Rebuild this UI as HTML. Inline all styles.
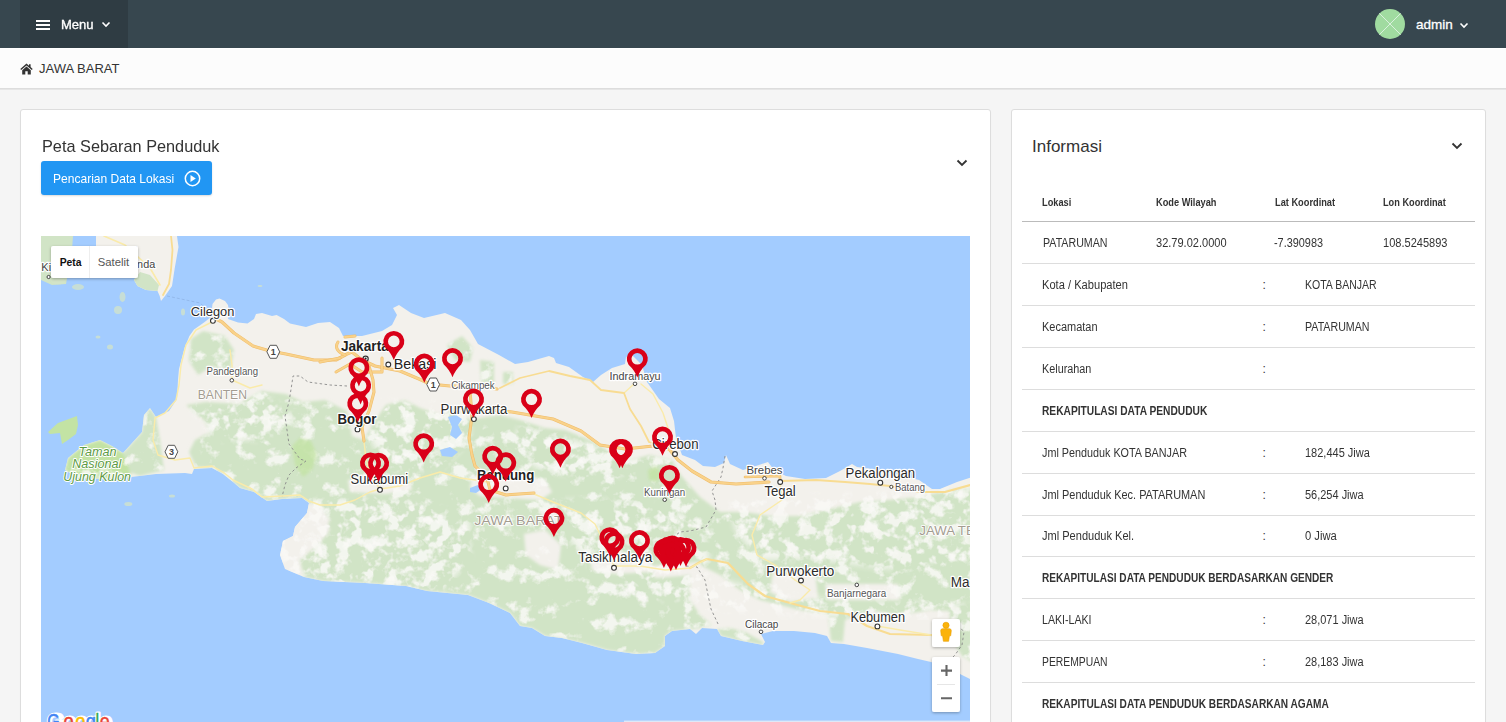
<!DOCTYPE html>
<html lang="id">
<head>
<meta charset="utf-8">
<title>JAWA BARAT</title>
<style>
*{box-sizing:border-box}
html,body{margin:0;padding:0}
body{width:1506px;height:722px;overflow:hidden;background:#f5f5f5;font-family:"Liberation Sans",Arial,sans-serif;font-size:13px;color:#333;position:relative}
.navbar{position:absolute;left:0;top:0;width:1506px;height:48px;background:#37474F}
.menu-btn{position:absolute;left:20px;top:0;width:108px;height:48px;background:#2f3c43}
.menu-btn .bars{position:absolute;left:16px;top:20px;width:14px;height:2px;background:#fff;box-shadow:0 4px 0 #fff,0 8px 0 #fff}
.menu-btn .txt{position:absolute;left:41px;top:16.5px;color:#fff;font-size:13.5px;line-height:16px;font-weight:normal;-webkit-text-stroke:0.35px #fff}
.user{position:absolute;left:1416px;top:17px;color:#fff;font-size:13.5px;line-height:16px;-webkit-text-stroke:0.3px #fff}
.avatar{position:absolute;left:1375px;top:9px;width:30px;height:30px;border-radius:50%;background:#a0dba0;overflow:hidden}
.pagehead{position:absolute;left:0;top:48px;width:1506px;height:41px;background:#fcfcfc;border-top:1px solid #fff;border-bottom:1px solid #ddd;box-shadow:0 1px 0 #e6e6e6}
.pagehead .t{position:absolute;left:39px;top:12px;font-size:13px;line-height:16px;color:#333}
.panel{position:absolute;background:#fff;border:1px solid #ddd;border-radius:3px;box-shadow:0 1px 1px rgba(0,0,0,.05)}
#p1{left:20px;top:109px;width:971px;height:640px}
#p2{left:1011px;top:109px;width:475px;height:640px}
.ptitle{position:absolute;font-size:17px;line-height:20px;color:#333}
.btn{position:absolute;left:20px;top:51px;width:171px;height:34px;background:#2196F3;border-radius:3px;color:#fff;font-size:13px;line-height:35px;padding-left:12px;box-shadow:0 1px 2px rgba(0,0,0,.15)}
#map{position:absolute;left:20px;top:126px;width:929px;height:500px;background:#a3ccff;overflow:hidden}
.hr{position:absolute;left:10px;width:453px;height:1px}
.c{position:absolute;transform-origin:0 50%;font-size:12px;line-height:16px;white-space:pre;color:#333}
.c.b{font-weight:bold}
.c.h{font-weight:bold;font-size:10.5px}
</style>
</head>
<body>
<div class="navbar">
  <div class="menu-btn"><div class="bars"></div><div class="txt" style="transform:scaleX(0.965);transform-origin:0 50%">Menu</div>
    <svg style="position:absolute;left:81px;top:21px" width="10" height="7" viewBox="0 0 10 7"><path d="M1.5 1.5 L5 5 L8.5 1.5" fill="none" stroke="#fff" stroke-width="1.6"/></svg>
  </div>
  <div class="avatar"><svg width="30" height="30" viewBox="0 0 30 30"><path d="M3 3 L27 27 M27 3 L3 27" stroke="#d9f0dc" stroke-width="1"/></svg></div>
  <div class="user">admin</div>
  <svg style="position:absolute;left:1458.5px;top:21.7px" width="10" height="7" viewBox="0 0 10 7"><path d="M1.5 1.5 L5 5 L8.5 1.5" fill="none" stroke="#fff" stroke-width="1.6"/></svg>
</div>
<div class="pagehead">
  <svg style="position:absolute;left:20px;top:14px" width="13" height="12" viewBox="0 0 13 12"><path d="M6.5 0.5 L0.3 6 L1.2 7 L6.5 2.4 L11.8 7 L12.7 6 L10.6 4.1 V1.2 H9 V2.7 Z M6.5 3.6 L2.2 7.3 V11.5 H5.3 V8.3 H7.7 V11.5 H10.8 V7.3 Z" fill="#333"/></svg>
  <div class="t">JAWA BARAT</div>
</div>

<div class="panel" id="p1">
  <div class="ptitle" style="left:21px;top:27px;transform:scaleX(0.958);transform-origin:0 50%;white-space:nowrap">Peta Sebaran Penduduk</div>
  <svg style="position:absolute;left:935px;top:49px" width="12" height="8" viewBox="0 0 12 8"><path d="M1.5 1.5 L6 6 L10.5 1.5" fill="none" stroke="#333" stroke-width="1.8"/></svg>
  <div class="btn"><span style="display:inline-block;transform:scaleX(0.926);transform-origin:0 50%;white-space:nowrap">Pencarian Data Lokasi</span>
    <svg style="position:absolute;left:143px;top:9px" width="17" height="17" viewBox="0 0 17 17"><circle cx="8.5" cy="8.5" r="7.2" fill="none" stroke="#fff" stroke-width="1.5"/><path d="M6.5 5 L11.8 8.5 L6.5 12 Z" fill="#fff"/></svg>
  </div>
  <div id="map"><svg width="929" height="486" viewBox="41 236 929 486" style="position:absolute;left:0;top:0;font-family:'Liberation Sans',Arial,sans-serif">
<rect x="41" y="236" width="929" height="486" fill="#a3ccff"/>
<polygon points="41,236 73,236 72,250 66,284 52,285 41,280" fill="#d1e4c6"/>
<polygon points="96,236 177,236 178.5,247 174.6,269 172,286 165,296 161,301 159.7,296 157.5,291 146,290 137.5,286 134,280 137,274 137,246 96,246" fill="#f3f1ec"/>
<polygon points="134,280 137.5,286 146,290 157.5,291 159,285 150,275 140,272" fill="#d1e4c6"/>
<polygon id="javap" points="219.5,298.5 225,301 228,305 229,312 228,319 238,322.6 247.5,323.6 254,319 256,314 262,313 272,316 276.6,315 284,319 290,323.6 306,327 318,323 330,322 339,328 343,336 362,336 382,331 392,325 397,315 393,308 399,305 411,313 424,318 445,313 461,320 470,330 478,344 499,355 515,364 528,362 549,356 554,358 556,363 569,367 583,377 593,382 601,375 612,368 625,364 626,357 632,355 642,365 647,382 659,399 670,408 674,421 676,438 682,455 695,460 703,466 715,467 724,463 726,455 730,464 743,470 753,467 768,462 774,470 786,476 805,479 826,478 840,471 852,464 857,467 880,470 919,480 932,489 940,489 957,482 972,477
972,680 960,674 931,662 918,659 898,654 867,648 844,644 831,643 827,636 815,633 794,631 773,631 761,634 765,642 763,645 742,641 721,636 717,629 702,628 696,634 690,629 672,631 665,636 665,646 655,653 636,654 607,650 582,643 562,638 545,636 532,628 520,626 510,613 489,603 468,595 427,591 406,586 365,583 323,581 304,577 285,569 280,555 283,541 293,536 295,527 307,513 309,503 302,498 282,499 267,501 254,492 240,488 233,482 223,474 212,468 194,469 192,474 185,473 156,474 131,477
104,479 78,478 65,470 68,458 84,445 100,440 112,446 123,453 142,432 144,415 150,408 156,417 169,411 177,399 178,380 179,369 184.5,348 189.4,336 194,329.4 204,322.6 211,317 212.5,304 216,299.5" fill="#f3f1ec"/>
<polygon points="48,432 58,423 77,416 78,425 76,434 68,440 62,444 60,433 50,434" fill="#c3e3a4"/>
<ellipse cx="78" cy="287" rx="6" ry="3" fill="#d3e4c8" opacity="0.75"/>
<ellipse cx="122.5" cy="297" rx="3" ry="5" fill="#d3e4c8" opacity="0.75"/>
<ellipse cx="118" cy="310" rx="4" ry="4" fill="#d3e4c8" opacity="0.75"/>
<ellipse cx="183" cy="312" rx="2" ry="3.5" fill="#d3e4c8" opacity="0.75"/>
<ellipse cx="98" cy="337" rx="2.5" ry="1.5" fill="#d3e4c8" opacity="0.75"/>
<ellipse cx="110" cy="347" rx="3" ry="2.5" fill="#d3e4c8" opacity="0.75"/>
<ellipse cx="128.3" cy="504" rx="4" ry="2" fill="#d3e4c8" opacity="0.75"/>
<ellipse cx="172" cy="496" rx="3" ry="1.5" fill="#d3e4c8" opacity="0.75"/>
<ellipse cx="260" cy="286" rx="2.5" ry="1" fill="#d3e4c8" opacity="0.75"/>
<ellipse cx="58" cy="281" rx="7" ry="3.5" fill="#d3e4c8" opacity="0.75"/>
<defs><filter id="bl" x="-5%" y="-5%" width="110%" height="110%"><feGaussianBlur stdDeviation="1.6"/></filter><clipPath id="cj"><use href="#javap"/></clipPath></defs>
<filter id="nz" x="0" y="0" width="100%" height="100%" filterUnits="objectBoundingBox"><feTurbulence type="fractalNoise" baseFrequency="0.06" numOctaves="4" seed="11" result="n"/><feColorMatrix in="n" type="matrix" values="0 0 0 0 0.953  0 0 0 0 0.945  0 0 0 0 0.925  6 0 0 0 -3.25" result="p"/><feGaussianBlur in="SourceGraphic" stdDeviation="1.6" result="sg"/><feComposite in="p" in2="sg" operator="in"/></filter>
<g clip-path="url(#cj)"><g filter="url(#bl)"><g id="ggn">
<polygon fill="#d1e4c6" points="191,339 203,331 225,336 234,350 230,372 212,366 198,375 189,361"/>
<polygon fill="#d1e4c6" points="186,405 206,402 239,404 261,391 286,394 303,402 325,400 347,411 352,436 364,440 372,425 386,405 405,400 420,408 440,415 455,408 470,420 480,418 500,415 520,420 545,428 565,430 590,440 610,452 630,460 650,455 670,462 685,480 700,497 720,512 745,512 770,516 800,516 830,509 860,502 890,500 920,497 950,490 972,488
972,612 930,610 900,615 870,610 845,620 843,642 831,641 828,615 800,610 780,605 760,600 740,590 720,575 700,565 690,572 690,600 700,615 712,625 700,628 690,629 672,631 665,636 665,646 655,653 636,654 607,650 582,643 562,638 545,636 532,628 520,626 510,613 489,603 468,595 427,591 406,586 365,583 323,581 304,577 300,560 320,540 330,520 320,505 309,503 302,498 282,499 267,501 254,492 240,488 233,482 223,474 212,468 196,467 189,452 195,440 210,432 204,420 194,412"/>
<polygon fill="#d1e4c6" points="142,432 144,415 150,408 156,417 160,440 164,470 140,476 123,470 123,453"/>
<polygon fill="#c3e3a4" points="131,477 104,479 78,478 65,470 68,458 84,445 100,440 112,446 123,453 128,465"/>
<polygon fill="#d1e4c6" points="948,598 972,596 972,662 962,656 952,640"/>
<polygon fill="#d1e4c6" points="721,636 717,629 730,628 745,632 763,642 763,645 742,641"/>
<polygon fill="#d1e4c6" points="447,345 462,336 473,348 470,362 455,360"/>
<polygon fill="#d1e4c6" points="480,360 494,362 494,383 481,382"/>
<polygon fill="#d1e4c6" points="503,372 513,372 513,384 503,384"/>
<polygon fill="#d1e4c6" points="633,462 650,455 672,460 682,478 672,492 650,490 636,480"/>
<polygon fill="#f3f1ec" points="472,478 490,472 520,474 545,480 552,492 540,500 510,498 480,496 470,488"/>
<polygon fill="#f3f1ec" points="348,480 380,476 410,480 412,490 385,494 350,492"/>
<polygon fill="#f3f1ec" points="590,556 620,552 652,558 650,572 615,574 592,570"/>
<polygon fill="#f3f1ec" points="524,534 545,530 561,545 558,570 540,565 526,555"/>
<polygon fill="#f3f1ec" points="650,566 700,562 705,574 655,578"/>
<polygon fill="#f3f1ec" points="773,572 815,572 818,598 790,602 770,592"/>
<polygon fill="#f3f1ec" points="825,584 898,584 900,600 828,600"/>
<polygon fill="#f3f1ec" points="281,505 300,500 322,508 330,530 318,545 300,560 290,572 282,560 281,540 292,534"/>
<polygon fill="#f3f1ec" points="540,510 555,508 560,522 545,526"/>
</g></g>
<use href="#ggn" filter="url(#nz)" opacity="0.85"/>
<filter id="nz2" x="0" y="0" width="100%" height="100%"><feTurbulence type="fractalNoise" baseFrequency="0.08" numOctaves="3" seed="23" result="n"/><feColorMatrix in="n" type="matrix" values="0 0 0 0 0.953  0 0 0 0 0.945  0 0 0 0 0.925  0 7 0 0 -3.5" result="p"/><feGaussianBlur in="SourceGraphic" stdDeviation="3" result="sg"/><feComposite in="p" in2="sg" operator="in"/></filter>
<g filter="url(#nz2)" opacity="0.85">
<polygon points="281,500 340,498 420,500 470,520 470,560 440,592 400,588 330,584 285,572 278,550" fill="#000"/>
<polygon points="560,500 640,500 700,520 710,560 690,600 640,600 600,580 570,540" fill="#000"/>
<polygon points="730,500 972,488 972,560 900,570 820,560 760,560 735,530" fill="#000"/>
<polygon points="186,405 260,392 300,420 260,440 215,440 200,420" fill="#000"/>
<polygon points="380,400 470,405 470,440 440,470 390,470 370,440" fill="#000"/>
<polygon points="520,425 610,450 640,470 600,480 540,470 510,450" fill="#000"/>
<polygon points="690,570 760,590 830,600 972,605 972,620 850,618 760,612 700,612" fill="#000"/>
</g>
</g>
<g filter="url(#bl)" opacity="0.8"><polygon fill="#c3e3a4" points="292,446 300,438 311,441 317,455 312,470 303,477 295,465"/><polygon fill="#c3e3a4" points="648,470 656,466 662,474 657,482 649,480"/></g>
<path fill="#a3ccff" d="M448,417 l8,-2 l6,4 l-4,6 l4,8 l-6,6 l-6,-4 l2,-8 z"/>
<path fill="#a3ccff" d="M440,450 l10,-3 l8,5 l-6,5 l-10,-1 z"/>
<path fill="#a3ccff" d="M470,488 l8,-3 l4,4 l-6,4 l-6,-1 z"/>
<path d="M347,386 L330,385 L308,382 L300,376 L293,376 L292,383 L289,402 L285,416 L287,430 L289,444 L300,459 L306,461 L296,468 L289,475 L285,485 L282,497" fill="none" stroke="#8a8a8a" stroke-width="0.9" stroke-dasharray="2.5,2.5"/>
<path d="M725,456 L723,468 L721,477 L712,491 L715,500 L716,510 L706,527 L690,531 L680,532 L672,538" fill="none" stroke="#8a8a8a" stroke-width="0.9" stroke-dasharray="2.5,2.5"/>
<path d="M686,566 L697,567 L705,580 L708,595 L711,609 L719,626" fill="none" stroke="#8a8a8a" stroke-width="0.9" stroke-dasharray="2.5,2.5"/>
<path d="M958,625 L964,632 L962,645 L955,655 L948,662" fill="none" stroke="#8a8a8a" stroke-width="0.9" stroke-dasharray="2.5,2.5"/>
<path d="M167,296 L200,303 L214,316" fill="none" stroke="#8fb4e6" stroke-width="0.8" stroke-dasharray="3,2"/>
<path d="M212,322 L196,330 L186,345 L181,365 L179,385 L176,400 L165,413 L155,418 L153,440 L158,455 L175,460 L190,458 L194,468 L212,466 L223,472 L233,480 L252,489 L262,497 L283,496 L300,495 L309,501 L320,505 L340,505 L355,500 L370,492 L380,489" fill="none" stroke="#faebaa" stroke-width="1.4" stroke-linejoin="round" stroke-linecap="round"/>
<path d="M380,489 L400,486 L420,478 L440,472 L460,478 L475,480 L488,482" fill="none" stroke="#faebaa" stroke-width="1.4" stroke-linejoin="round" stroke-linecap="round"/>
<path d="M364,441 L366,460 L372,478 L380,489" fill="none" stroke="#faebaa" stroke-width="1.4" stroke-linejoin="round" stroke-linecap="round"/>
<path d="M500,388 L520,378 L549,371 L570,376 L590,380 L601,390 L624,393" fill="none" stroke="#f8dc92" stroke-width="1.8" stroke-linejoin="round" stroke-linecap="round"/>
<path d="M624,393 L634,384" fill="none" stroke="#faebaa" stroke-width="1.4" stroke-linejoin="round" stroke-linecap="round"/>
<path d="M624,393 L630,409 L641,426 L649,442 L661,446" fill="none" stroke="#f8dc92" stroke-width="1.8" stroke-linejoin="round" stroke-linecap="round"/>
<path d="M641,384 L653,394 L663,413 L668,428 L670,446" fill="none" stroke="#faebaa" stroke-width="1.4" stroke-linejoin="round" stroke-linecap="round"/>
<path d="M780,481 L816,480 L845,482 L870,484 L890,486 L920,492 L945,492 L970,485" fill="none" stroke="#f8dc92" stroke-width="2.2" stroke-linejoin="round" stroke-linecap="round"/>
<path d="M780,482 L782,500 L760,515 L752,535 L757,555 L775,565 L795,580" fill="none" stroke="#faebaa" stroke-width="1.4" stroke-linejoin="round" stroke-linecap="round"/>
<path d="M690,568 L700,562 L707,559 L728,563 L748,584 L765,596 L790,603 L820,611 L848,614 L867,626 L890,634 L931,635 L958,640" fill="none" stroke="#f8dc92" stroke-width="2.2" stroke-linejoin="round" stroke-linecap="round"/>
<path d="M534,494 L553,502 L581,513 L595,524 L605,545 L614,566" fill="none" stroke="#faebaa" stroke-width="1.4" stroke-linejoin="round" stroke-linecap="round"/>
<path d="M614,566 L640,566 L665,570 L690,568 L707,559" fill="none" stroke="#faebaa" stroke-width="1.4" stroke-linejoin="round" stroke-linecap="round"/>
<path d="M230,350 L232,365 L232,380 L250,388 L262,385" fill="none" stroke="#faebaa" stroke-width="1.4" stroke-linejoin="round" stroke-linecap="round"/>
<path d="M877,626 L900,630 L931,635" fill="none" stroke="#faebaa" stroke-width="1.4" stroke-linejoin="round" stroke-linecap="round"/>
<path d="M795,580 L810,590 L800,600 L790,603" fill="none" stroke="#faebaa" stroke-width="1.4" stroke-linejoin="round" stroke-linecap="round"/>
<path d="M171,236 L172.5,250 L171,270 L169,284 L163,295" fill="none" stroke="#f8dc92" stroke-width="1.8" stroke-linejoin="round" stroke-linecap="round"/>
<path d="M104,236 L125,245 L150,268 L160,285" fill="none" stroke="#faebaa" stroke-width="1.6" stroke-linejoin="round" stroke-linecap="round"/>
<path d="M214,318 L222,322 L234,333 L253,346 L270,351 L286,354 L314,360 L336,360 L347,354 L352,352" fill="none" stroke="#efbc6a" stroke-width="3.2" stroke-linejoin="round" stroke-linecap="round"/>
<path d="M214,318 L222,322 L234,333 L253,346 L270,351 L286,354 L314,360 L336,360 L347,354 L352,352" fill="none" stroke="#f9d28a" stroke-width="2.2" stroke-linejoin="round" stroke-linecap="round"/>
<path d="M352,352 L362,360 L375,366 L400,371 L419,379 L430,384 L450,386 L469,386 L497,389" fill="none" stroke="#efbc6a" stroke-width="3.2" stroke-linejoin="round" stroke-linecap="round"/>
<path d="M352,352 L362,360 L375,366 L400,371 L419,379 L430,384 L450,386 L469,386 L497,389" fill="none" stroke="#f9d28a" stroke-width="2.2" stroke-linejoin="round" stroke-linecap="round"/>
<path d="M338,342 Q333,350 345,355 M320,362 L340,358 M336,372 L350,364 L362,372 L382,372 L382,358 M345,337 L355,336" fill="none" stroke="#efbc6a" stroke-width="3" stroke-linejoin="round" stroke-linecap="round"/>
<path d="M338,342 Q333,350 345,355 M320,362 L340,358 M336,372 L350,364 L362,372 L382,372 L382,358 M345,337 L355,336" fill="none" stroke="#f9d28a" stroke-width="2" stroke-linejoin="round" stroke-linecap="round"/>
<path d="M369,366 L373,380 L374,392 L369,411 L362,427 L364,441" fill="none" stroke="#efbc6a" stroke-width="3" stroke-linejoin="round" stroke-linecap="round"/>
<path d="M369,366 L373,380 L374,392 L369,411 L362,427 L364,441" fill="none" stroke="#f9d28a" stroke-width="2" stroke-linejoin="round" stroke-linecap="round"/>
<path d="M470,390 L472,416 L469,438 L472,455 L475,466 L487,478 L490,490 L506,495 L534,493" fill="none" stroke="#efbc6a" stroke-width="3" stroke-linejoin="round" stroke-linecap="round"/>
<path d="M470,390 L472,416 L469,438 L472,455 L475,466 L487,478 L490,490 L506,495 L534,493" fill="none" stroke="#f9d28a" stroke-width="2" stroke-linejoin="round" stroke-linecap="round"/>
<path d="M474,408 L512,412 L553,419 L581,431 L600,445 L625,449 L653,446 L669,449 L678,460 L692,471 L711,482 L736,484 L769,482" fill="none" stroke="#efbc6a" stroke-width="3.2" stroke-linejoin="round" stroke-linecap="round"/>
<path d="M474,408 L512,412 L553,419 L581,431 L600,445 L625,449 L653,446 L669,449 L678,460 L692,471 L711,482 L736,484 L769,482" fill="none" stroke="#f9d28a" stroke-width="2.2" stroke-linejoin="round" stroke-linecap="round"/>
<path d="M745,477 L780,476 L780,481" fill="none" stroke="#efbc6a" stroke-width="2.6" stroke-linejoin="round" stroke-linecap="round"/>
<path d="M745,477 L780,476 L780,481" fill="none" stroke="#f9d28a" stroke-width="1.6" stroke-linejoin="round" stroke-linecap="round"/>
<polygon points="270.1,345.3 276.5,345.3 279.7,351.8 276.5,358.3 270.1,358.3 266.90000000000003,351.8" fill="#fff" stroke="#555" stroke-width="1"/>
<text x="273.3" y="355.0" font-size="9" font-weight="bold" text-anchor="middle" fill="#444">1</text>
<polygon points="430.0,378.0 436.4,378.0 439.59999999999997,384.5 436.4,391.0 430.0,391.0 426.8,384.5" fill="#fff" stroke="#555" stroke-width="1"/>
<text x="433.2" y="387.7" font-size="9" font-weight="bold" text-anchor="middle" fill="#444">1</text>
<polygon points="168.20000000000002,445.3 174.6,445.3 177.8,451.8 174.6,458.3 168.20000000000002,458.3 165.0,451.8" fill="#fff" stroke="#555" stroke-width="1"/>
<text x="171.4" y="455.0" font-size="9" font-weight="bold" text-anchor="middle" fill="#444">3</text>
<circle cx="212.9" cy="320.8" r="2.4" fill="#fff" stroke="#333" stroke-width="1.1"/>
<text x="190.8" y="315.5" font-size="13.5" font-weight="normal" fill="#2b2b2b" stroke="#fff" stroke-width="2.4" stroke-linejoin="round" paint-order="stroke" textLength="43.5" lengthAdjust="spacingAndGlyphs">Cilegon</text>
<circle cx="231.8" cy="380.3" r="1.8" fill="#fff" stroke="#333" stroke-width="0.9"/>
<text x="206.6" y="375.3" font-size="10.5" font-weight="normal" fill="#555" stroke="#fff" stroke-width="2.4" stroke-linejoin="round" paint-order="stroke" textLength="51.4" lengthAdjust="spacingAndGlyphs">Pandeglang</text>
<text x="197.7" y="399.2" font-size="12" font-weight="normal" fill="#a39c90" stroke="#fff" stroke-width="1.5" stroke-linejoin="round" paint-order="stroke" textLength="49.3" lengthAdjust="spacingAndGlyphs">BANTEN</text>
<circle cx="365.6" cy="358.7" r="2.6" fill="#fff" stroke="#333" stroke-width="1.2"/>
<circle cx="365.6" cy="358.7" r="1.1" fill="#222"/>
<text x="340.9" y="351.2" font-size="15" font-weight="bold" fill="#222" stroke="#fff" stroke-width="2.4" stroke-linejoin="round" paint-order="stroke" textLength="47.9" lengthAdjust="spacingAndGlyphs">Jakarta</text>
<circle cx="388.3" cy="364.5" r="2.4" fill="#fff" stroke="#333" stroke-width="1.1"/>
<text x="393.8" y="369.3" font-size="15" font-weight="normal" fill="#222" stroke="#fff" stroke-width="2.4" stroke-linejoin="round" paint-order="stroke" textLength="42.7" lengthAdjust="spacingAndGlyphs">Bekasi</text>
<text x="451.2" y="388.6" font-size="10.5" font-weight="normal" fill="#555" stroke="#fff" stroke-width="2.4" stroke-linejoin="round" paint-order="stroke" textLength="43.5" lengthAdjust="spacingAndGlyphs">Cikampek</text>
<circle cx="473.9" cy="419.1" r="2.4" fill="#fff" stroke="#333" stroke-width="1.1"/>
<text x="440.6" y="414.1" font-size="14" font-weight="normal" fill="#2b2b2b" stroke="#fff" stroke-width="2.4" stroke-linejoin="round" paint-order="stroke" textLength="66.8" lengthAdjust="spacingAndGlyphs">Purwakarta</text>
<circle cx="357.5" cy="429.4" r="2.4" fill="#fff" stroke="#333" stroke-width="1.1"/>
<text x="337.6" y="423.5" font-size="15" font-weight="bold" fill="#222" stroke="#fff" stroke-width="2.4" stroke-linejoin="round" paint-order="stroke" textLength="38.8" lengthAdjust="spacingAndGlyphs">Bogor</text>
<circle cx="380" cy="489.8" r="2.4" fill="#fff" stroke="#333" stroke-width="1.1"/>
<text x="350.6" y="484.2" font-size="14" font-weight="normal" fill="#2b2b2b" stroke="#fff" stroke-width="2.4" stroke-linejoin="round" paint-order="stroke" textLength="57.6" lengthAdjust="spacingAndGlyphs">Sukabumi</text>
<circle cx="505.7" cy="488.4" r="2.4" fill="#fff" stroke="#333" stroke-width="1.1"/>
<text x="476.9" y="480" font-size="15" font-weight="bold" fill="#222" stroke="#fff" stroke-width="2.4" stroke-linejoin="round" paint-order="stroke" textLength="57.4" lengthAdjust="spacingAndGlyphs">Bandung</text>
<circle cx="635" cy="383.8" r="1.8" fill="#fff" stroke="#333" stroke-width="0.9"/>
<text x="609.5" y="379.5" font-size="10.5" font-weight="normal" fill="#444" stroke="#fff" stroke-width="2.4" stroke-linejoin="round" paint-order="stroke" textLength="51.1" lengthAdjust="spacingAndGlyphs">Indramayu</text>
<circle cx="675" cy="454" r="2.4" fill="#fff" stroke="#333" stroke-width="1.1"/>
<text x="652.3" y="449.3" font-size="14" font-weight="normal" fill="#2b2b2b" stroke="#fff" stroke-width="2.4" stroke-linejoin="round" paint-order="stroke" textLength="46.2" lengthAdjust="spacingAndGlyphs">Cirebon</text>
<circle cx="664.7" cy="499.7" r="1.8" fill="#fff" stroke="#333" stroke-width="0.9"/>
<text x="644" y="495.6" font-size="10.5" font-weight="normal" fill="#555" stroke="#fff" stroke-width="2.4" stroke-linejoin="round" paint-order="stroke" textLength="41.2" lengthAdjust="spacingAndGlyphs">Kuningan</text>
<circle cx="764.5" cy="478.3" r="1.8" fill="#fff" stroke="#333" stroke-width="0.9"/>
<text x="746.5" y="473.6" font-size="11.5" font-weight="normal" fill="#444" stroke="#fff" stroke-width="2.4" stroke-linejoin="round" paint-order="stroke" textLength="36.0" lengthAdjust="spacingAndGlyphs">Brebes</text>
<circle cx="780.2" cy="482" r="2.4" fill="#fff" stroke="#333" stroke-width="1.1"/>
<text x="764.5" y="495.8" font-size="14" font-weight="normal" fill="#2b2b2b" stroke="#fff" stroke-width="2.4" stroke-linejoin="round" paint-order="stroke" textLength="31.2" lengthAdjust="spacingAndGlyphs">Tegal</text>
<circle cx="880.3" cy="482.7" r="2.4" fill="#fff" stroke="#333" stroke-width="1.1"/>
<text x="845.6" y="477.8" font-size="14" font-weight="normal" fill="#2b2b2b" stroke="#fff" stroke-width="2.4" stroke-linejoin="round" paint-order="stroke" textLength="69.6" lengthAdjust="spacingAndGlyphs">Pekalongan</text>
<circle cx="891.3" cy="486.9" r="1.6" fill="#fff" stroke="#333" stroke-width="0.9"/>
<text x="895" y="490.6" font-size="10.5" font-weight="normal" fill="#555" stroke="#fff" stroke-width="2.4" stroke-linejoin="round" paint-order="stroke" textLength="30.0" lengthAdjust="spacingAndGlyphs">Batang</text>
<text x="919.3" y="535.3" font-size="12" font-weight="normal" fill="#a39c90" stroke="#fff" stroke-width="1.5" stroke-linejoin="round" paint-order="stroke" textLength="93.7" lengthAdjust="spacingAndGlyphs">JAWA TENGAH</text>
<text x="474.2" y="524.6" font-size="12" font-weight="normal" fill="#a39c90" stroke="#fff" stroke-width="1.5" stroke-linejoin="round" paint-order="stroke" textLength="88.6" lengthAdjust="spacingAndGlyphs">JAWA BARAT</text>
<circle cx="614" cy="567.8" r="2.4" fill="#fff" stroke="#333" stroke-width="1.1"/>
<text x="578.2" y="561.6" font-size="14" font-weight="normal" fill="#2b2b2b" stroke="#fff" stroke-width="2.4" stroke-linejoin="round" paint-order="stroke" textLength="74.0" lengthAdjust="spacingAndGlyphs">Tasikmalaya</text>
<circle cx="801" cy="580.5" r="2.4" fill="#fff" stroke="#333" stroke-width="1.1"/>
<text x="766.3" y="576" font-size="14" font-weight="normal" fill="#2b2b2b" stroke="#fff" stroke-width="2.4" stroke-linejoin="round" paint-order="stroke" textLength="68.0" lengthAdjust="spacingAndGlyphs">Purwokerto</text>
<circle cx="761" cy="631.8" r="1.8" fill="#fff" stroke="#333" stroke-width="0.9"/>
<text x="745" y="627.7" font-size="11" font-weight="normal" fill="#444" stroke="#fff" stroke-width="2.4" stroke-linejoin="round" paint-order="stroke" textLength="33.3" lengthAdjust="spacingAndGlyphs">Cilacap</text>
<circle cx="856.8" cy="584.9" r="1.8" fill="#fff" stroke="#333" stroke-width="0.9"/>
<text x="827" y="596.5" font-size="10.5" font-weight="normal" fill="#555" stroke="#fff" stroke-width="2.4" stroke-linejoin="round" paint-order="stroke" textLength="59.3" lengthAdjust="spacingAndGlyphs">Banjarnegara</text>
<circle cx="877.4" cy="626.4" r="2.4" fill="#fff" stroke="#333" stroke-width="1.1"/>
<text x="850.4" y="621.9" font-size="14" font-weight="normal" fill="#2b2b2b" stroke="#fff" stroke-width="2.4" stroke-linejoin="round" paint-order="stroke" textLength="54.6" lengthAdjust="spacingAndGlyphs">Kebumen</text>
<text x="950.7" y="586.5" font-size="14" font-weight="normal" fill="#2b2b2b" stroke="#fff" stroke-width="2.4" stroke-linejoin="round" paint-order="stroke" textLength="59.3" lengthAdjust="spacingAndGlyphs">Magelang</text>
<text x="78.4" y="455.8" font-size="13" font-weight="normal" font-style="italic" fill="#5d9b45" stroke="#fff" stroke-width="2" stroke-linejoin="round" paint-order="stroke" textLength="38.1" lengthAdjust="spacingAndGlyphs">Taman</text>
<text x="72.2" y="468.3" font-size="13" font-weight="normal" font-style="italic" fill="#5d9b45" stroke="#fff" stroke-width="2" stroke-linejoin="round" paint-order="stroke" textLength="49.2" lengthAdjust="spacingAndGlyphs">Nasional</text>
<text x="63.3" y="481.2" font-size="13" font-weight="normal" font-style="italic" fill="#5d9b45" stroke="#fff" stroke-width="2" stroke-linejoin="round" paint-order="stroke" textLength="67.7" lengthAdjust="spacingAndGlyphs">Ujung Kulon</text>
<text x="41.3" y="271.3" font-size="11" font-weight="normal" fill="#444" stroke="#fff" stroke-width="2.4" stroke-linejoin="round" paint-order="stroke" textLength="30.7" lengthAdjust="spacingAndGlyphs">Kiluan</text>
<circle cx="48.6" cy="277" r="1.6" fill="#fff" stroke="#333" stroke-width="0.9"/>
<text x="113" y="267.6" font-size="11" font-weight="normal" fill="#444" stroke="#fff" stroke-width="2.4" stroke-linejoin="round" paint-order="stroke" textLength="42.2" lengthAdjust="spacingAndGlyphs">Kalianda</text>
<defs><path id="mk" fill-rule="evenodd" fill="#d90018" d="M0,0 Q-2.8,-7.5 -8.7,-12.8 A10.5,10.5 0 1 1 8.7,-12.8 Q2.8,-7.5 0,0 Z M0,-12.9 A5.8,5.8 0 1 0 0,-24.5 A5.8,5.8 0 1 0 0,-12.9 Z"/></defs>
<use href="#mk" x="393.8" y="360.1"/>
<use href="#mk" x="452.5" y="377.2"/>
<use href="#mk" x="637.3" y="377.5"/>
<use href="#mk" x="424.3" y="382.8"/>
<use href="#mk" x="358.9" y="386.4"/>
<use href="#mk" x="360.6" y="404.4"/>
<use href="#mk" x="473.5" y="417.8"/>
<use href="#mk" x="531.5" y="418"/>
<use href="#mk" x="357.8" y="422.4"/>
<use href="#mk" x="662.5" y="455.8"/>
<use href="#mk" x="423.7" y="462.5"/>
<use href="#mk" x="560.4" y="467.7"/>
<use href="#mk" x="622.4" y="468.3"/>
<use href="#mk" x="619.6" y="468.3"/>
<use href="#mk" x="492.7" y="475"/>
<use href="#mk" x="505.7" y="481.5"/>
<use href="#mk" x="370.5" y="481.8"/>
<use href="#mk" x="378.6" y="482"/>
<use href="#mk" x="669.4" y="494.1"/>
<use href="#mk" x="488.7" y="503"/>
<use href="#mk" x="553.9" y="537"/>
<use href="#mk" x="609.9" y="556.4"/>
<use href="#mk" x="639.5" y="559.2"/>
<use href="#mk" x="614" y="560.5"/>
<use href="#mk" x="672.2" y="564.7"/>
<use href="#mk" x="668" y="566"/>
<use href="#mk" x="680.5" y="566.1"/>
<use href="#mk" x="686" y="566.9"/>
<use href="#mk" x="663.9" y="568"/>
<use href="#mk" x="676" y="570"/>
<use href="#mk" x="670.8" y="571.5"/>
<defs><filter id="sh" x="-10%" y="-10%" width="120%" height="130%"><feDropShadow dx="0" dy="1" stdDeviation="1.5" flood-color="#000" flood-opacity="0.3"/></filter></defs><g filter="url(#sh)">
<rect x="51" y="246" width="87" height="32" rx="2" fill="#fff"/>
<rect x="932" y="619" width="28" height="28" rx="2" fill="#fff"/>
<rect x="932" y="657" width="28" height="55" rx="2" fill="#fff"/>
</g>
<rect x="89" y="246" width="1" height="32" fill="#eee"/>
<text x="59.7" y="266" font-size="11" font-weight="bold" fill="#111" textLength="21.9" lengthAdjust="spacingAndGlyphs">Peta</text>
<text x="97.8" y="266" font-size="11" fill="#565656" textLength="31.4" lengthAdjust="spacingAndGlyphs">Satelit</text>
<rect x="937" y="684" width="18" height="1" fill="#e6e6e6"/>
<path d="M941,670.6 h11 M946.5,665.1 v11 M941,698.3 h11" stroke="#666" stroke-width="2.1" fill="none"/>
<g fill="#fbb30a" stroke="#e79c00" stroke-width="0.6"><path d="M940.7,630.6 Q940.7,628.7 942.6,628.7 L949.4,628.7 Q951.3,628.7 951.3,630.6 L950.7,635.8 L949.4,635.8 L948.6,641.3 L943.4,641.3 L942.6,635.8 L941.3,635.8 Z"/><circle cx="946" cy="625.3" r="3.1"/></g>
<g font-size="22" stroke-linejoin="round">
<text x="47.3" y="729.3" fill="#fff" stroke="#fff" stroke-width="3.2">G</text>
<text x="63.4" y="729.3" fill="#fff" stroke="#fff" stroke-width="3.2">o</text>
<text x="75.2" y="729.3" fill="#fff" stroke="#fff" stroke-width="3.2">o</text>
<text x="85.8" y="729.3" fill="#fff" stroke="#fff" stroke-width="3.2">g</text>
<text x="95.6" y="729.3" fill="#fff" stroke="#fff" stroke-width="3.2">l</text>
<text x="99.8" y="729.3" fill="#fff" stroke="#fff" stroke-width="3.2">e</text>
<text x="47.3" y="729.3" fill="#4285f4" stroke="#4285f4" stroke-width="0.5" textLength="12.5" lengthAdjust="spacingAndGlyphs">G</text>
<text x="63.4" y="729.3" fill="#ea4335" stroke="#ea4335" stroke-width="0.5" textLength="10.2" lengthAdjust="spacingAndGlyphs">o</text>
<text x="75.2" y="729.3" fill="#fbbc05" stroke="#fbbc05" stroke-width="0.5" textLength="10.2" lengthAdjust="spacingAndGlyphs">o</text>
<text x="85.8" y="729.3" fill="#4285f4" stroke="#4285f4" stroke-width="0.5" textLength="10.2" lengthAdjust="spacingAndGlyphs">g</text>
<text x="95.6" y="729.3" fill="#34a853" stroke="#34a853" stroke-width="0.5" textLength="3.6" lengthAdjust="spacingAndGlyphs">l</text>
<text x="99.8" y="729.3" fill="#ea4335" stroke="#ea4335" stroke-width="0.5" textLength="10" lengthAdjust="spacingAndGlyphs">e</text>
</g>
<rect x="624" y="720.6" width="346" height="14" fill="#f5f5f5" opacity="0.7"/>
<text x="630" y="731" font-size="10" fill="#444">Data peta ©2017 Google   Persyaratan Penggunaan   Laporkan kesalahan peta</text>
</svg></div><!--ENDMAP-->
</div>

<div class="panel" id="p2">
  <div class="ptitle" style="left:20px;top:27px;white-space:nowrap">Informasi</div>
  <svg style="position:absolute;left:439px;top:32px" width="12" height="8" viewBox="0 0 12 8"><path d="M1.5 1.5 L6 6 L10.5 1.5" fill="none" stroke="#333" stroke-width="1.8"/></svg>
  <!--TABLE--><div class="hr" style="top:111px;background:#bbb"></div>
<div class="hr" style="top:153px;background:#ddd"></div>
<div class="hr" style="top:195px;background:#ddd"></div>
<div class="hr" style="top:237px;background:#ddd"></div>
<div class="hr" style="top:279px;background:#ddd"></div>
<div class="hr" style="top:321px;background:#ddd"></div>
<div class="hr" style="top:363px;background:#ddd"></div>
<div class="hr" style="top:405px;background:#ddd"></div>
<div class="hr" style="top:446px;background:#ddd"></div>
<div class="hr" style="top:488px;background:#ddd"></div>
<div class="hr" style="top:530px;background:#ddd"></div>
<div class="hr" style="top:572px;background:#ddd"></div>
<div class="hr" style="top:614px;background:#ddd"></div>
<div class="c h" style="left:30.0px;top:83.6px;transform:scaleX(0.8778);">Lokasi</div>
<div class="c h" style="left:143.6px;top:83.6px;transform:scaleX(0.8798);">Kode Wilayah</div>
<div class="c h" style="left:262.9px;top:83.6px;transform:scaleX(0.8806);">Lat Koordinat</div>
<div class="c h" style="left:371.0px;top:83.6px;transform:scaleX(0.8753);">Lon Koordinat</div>
<div class="c" style="left:30.5px;top:124.5px;transform:scaleX(0.8876);">PATARUMAN</div>
<div class="c" style="left:143.6px;top:124.5px;transform:scaleX(0.9199);">32.79.02.0000</div>
<div class="c" style="left:262.4px;top:124.5px;transform:scaleX(0.9066);">-7.390983</div>
<div class="c" style="left:370.8px;top:124.5px;transform:scaleX(0.9204);">108.5245893</div>
<div class="c" style="left:30.3px;top:166.5px;transform:scaleX(0.9272);">Kota / Kabupaten</div>
<div class="c" style="left:250.5px;top:166.5px;">:</div>
<div class="c" style="left:293.0px;top:166.5px;transform:scaleX(0.8766);">KOTA BANJAR</div>
<div class="c" style="left:30.3px;top:208.5px;transform:scaleX(0.9143);">Kecamatan</div>
<div class="c" style="left:250.5px;top:208.5px;">:</div>
<div class="c" style="left:293.0px;top:208.5px;transform:scaleX(0.8876);">PATARUMAN</div>
<div class="c" style="left:30.3px;top:250.5px;transform:scaleX(0.9010);">Kelurahan</div>
<div class="c" style="left:250.5px;top:250.5px;">:</div>
<div class="c b" style="left:30.3px;top:292.5px;transform:scaleX(0.8501);">REKAPITULASI DATA PENDUDUK</div>
<div class="c" style="left:30.3px;top:334.5px;transform:scaleX(0.8996);">Jml Penduduk KOTA BANJAR</div>
<div class="c" style="left:250.5px;top:334.5px;">:</div>
<div class="c" style="left:293.0px;top:334.5px;transform:scaleX(0.9163);">182,445 Jiwa</div>
<div class="c" style="left:30.3px;top:376.5px;transform:scaleX(0.9103);">Jml Penduduk Kec. PATARUMAN</div>
<div class="c" style="left:250.5px;top:376.5px;">:</div>
<div class="c" style="left:293.0px;top:376.5px;transform:scaleX(0.9150);">56,254 Jiwa</div>
<div class="c" style="left:30.3px;top:418.0px;transform:scaleX(0.9204);">Jml Penduduk Kel.</div>
<div class="c" style="left:250.5px;top:418.0px;">:</div>
<div class="c" style="left:293.0px;top:418.0px;transform:scaleX(0.9349);">0 Jiwa</div>
<div class="c b" style="left:30.3px;top:459.5px;transform:scaleX(0.8408);">REKAPITULASI DATA PENDUDUK BERDASARKAN GENDER</div>
<div class="c" style="left:30.3px;top:501.5px;transform:scaleX(0.8834);">LAKI-LAKI</div>
<div class="c" style="left:250.5px;top:501.5px;">:</div>
<div class="c" style="left:293.0px;top:501.5px;transform:scaleX(0.9150);">28,071 Jiwa</div>
<div class="c" style="left:30.3px;top:543.5px;transform:scaleX(0.8630);">PEREMPUAN</div>
<div class="c" style="left:250.5px;top:543.5px;">:</div>
<div class="c" style="left:293.0px;top:543.5px;transform:scaleX(0.9150);">28,183 Jiwa</div>
<div class="c b" style="left:30.3px;top:585.5px;transform:scaleX(0.8435);">REKAPITULASI DATA PENDUDUK BERDASARKAN AGAMA</div><!--ENDTABLE-->
</div>
</body>
</html>
